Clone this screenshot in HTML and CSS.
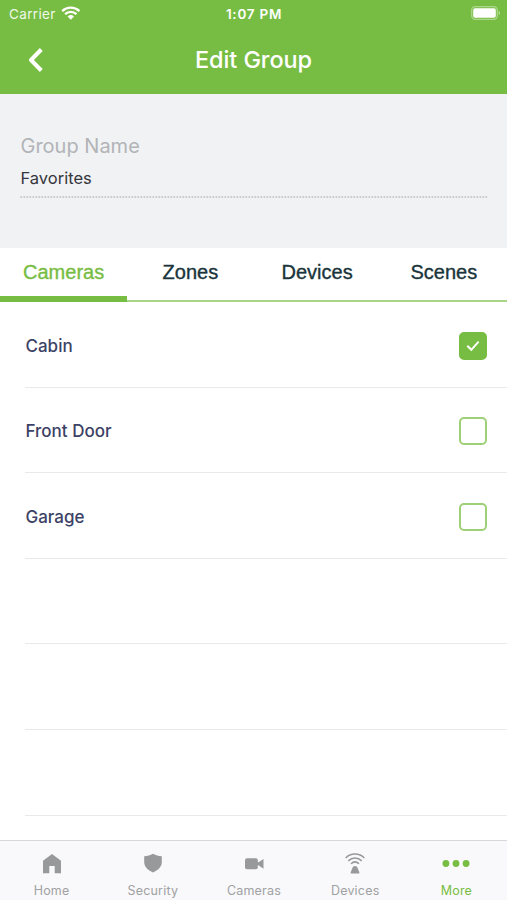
FILE: index.html
```html
<!DOCTYPE html>
<html lang="en">
<head>
<meta charset="utf-8">
<title>Edit Group</title>
<link rel="stylesheet" href="styles.css">
</head>
<body>
<div class="app">
  <header class="top">
    <div class="status">
      <div class="carrier"><span>Carrier</span>
        <svg width="20" height="14" viewBox="0 0 20 14" fill="none" stroke="#fff" stroke-width="2.3"><path d="M1.2 5.1a12.6 12.6 0 0 1 17.2 0M4.1 8.2a8.4 8.4 0 0 1 11.4 0"/><path d="M6.600 10.500a4.700 4.700 0 0 1 6.400 0L9.800 13.700z" fill="#fff" stroke="none"/></svg>
      </div>
      <span class="time">1:07 PM</span>
      <svg class="battery" width="30" height="14" viewBox="0 0 30 14"><rect x=".7" y=".7" width="25.600" height="12.600" rx="3.500" fill="none" stroke="#fff" stroke-opacity=".4" stroke-width="1.300"/><rect x="2.200" y="2.200" width="22.600" height="9.600" rx="1.800" fill="#fff"/><path d="M27.700 5v4a2.200 2.200 0 0 0 0-4z" fill="#fff" fill-opacity=".5"/></svg>
    </div>
    <div class="navbar">
      <svg class="back" width="16" height="26" viewBox="0 0 16 26" fill="none" stroke="#fff" stroke-width="4" stroke-linejoin="round"><path d="M14.300 2.500 4 13 14.300 23.500"/></svg>
      <h1>Edit Group</h1>
    </div>
  </header>
  <section class="group">
    <label for="name">Group Name</label>
    <div class="value" id="name">Favorites</div>
    <svg class="dots" width="468" height="2" viewBox="0 0 468 2"><path d="M.5 1h467.500" stroke="#bcbdc0" stroke-width="1.5" stroke-dasharray="1.7 1.3"/></svg>
  </section>
  <nav class="tabs">
    <div class="tab active"><span>Cameras</span></div>
    <div class="tab"><span>Zones</span></div>
    <div class="tab"><span>Devices</span></div>
    <div class="tab"><span>Scenes</span></div>
  </nav>
  <main class="list">
    <div class="row"><span>Cabin</span><i class="box checked"><svg width="14" height="12" viewBox="0 0 14 12" fill="none" stroke="#fff" stroke-width="2"><path d="M1.300 5.800 5.300 9.800 12.600 1.700"/></svg></i></div>
    <div class="row"><span>Front Door</span><i class="box"></i></div>
    <div class="row"><span>Garage</span><i class="box"></i></div>
    <div class="row"></div>
    <div class="row"></div>
    <div class="row"></div>
  </main>
  <footer class="bar">
    <div class="item"><svg width="30" height="24" viewBox="0 0 30 24"><path fill="currentColor" d="M6 21.200V8.800L15 2l9 6.800v12.400h-6.300V14h-5.400v7.200z"/></svg><span>Home</span></div>
    <div class="item"><svg width="30" height="24" viewBox="0 0 30 24"><path fill="currentColor" d="M15 1.800c2.800 1.500 5.500 2.200 8.800 2.400V10c0 4.900-3.700 8.200-8.800 10.500C9.900 18.200 6.200 14.900 6.200 10V4.200c3.300-.2 6-.9 8.800-2.400z"/></svg><span>Security</span></div>
    <div class="item"><svg width="30" height="24" viewBox="0 0 30 24"><rect x="6" y="6.300" width="12.800" height="11" rx="2" fill="currentColor"/><path fill="currentColor" d="M18 10.300h1.500l5-3.400v9.800l-5-3.400H18z"/></svg><span>Cameras</span></div>
    <div class="item"><svg width="30" height="24" viewBox="0 0 30 24" fill="none" stroke="currentColor" stroke-width="1.500"><path d="M5.700 6c5-5.300 13.600-5.300 18.600 0M8.300 8.900c3.900-3.900 9.500-3.900 13.400 0M11 11.700c2.400-2.200 5.600-2.200 8 0"/><path d="M15 14c1.500 0 2.100.8 2.700 2.200l1.700 4.200q.3 1.100-.8 1.100h-7.200q-1.100 0-.8-1.100l1.700-4.200C12.900 14.800 13.500 14 15 14z" fill="currentColor" stroke="none"/></svg><span>Devices</span></div>
    <div class="item on"><svg width="30" height="24" viewBox="0 0 30 24" fill="currentColor"><circle cx="4.900" cy="11.500" r="3.400"/><circle cx="15" cy="11.500" r="3.400"/><circle cx="25.100" cy="11.500" r="3.400"/></svg><span>More</span></div>
  </footer>
</div>
</body>
</html>
```
FILE: styles.css
```css
* { box-sizing: border-box; }
body { margin: 0; background: #fff; font-family: Inter, "Liberation Sans", sans-serif; }
svg { display: block; }
.app { width: 507px; height: 900px; display: flex; flex-direction: column; overflow: hidden; }

.top { height: 94px; background: #78bd43; color: #fff; }
.status { height: 28px; display: grid; grid-template-columns: 1fr auto 1fr; align-items: center; padding: 0 6px 0 9px; font-size: 13.5px; line-height: 28px; }
.carrier { display: flex; align-items: center; gap: 5px; letter-spacing: .35px; color: #f0f8e9; }
.carrier svg { margin-top: -2px; }
.time { font-weight: 600; font-size: 13.5px; letter-spacing: .75px; margin-right: 2px; }
.battery { justify-self: end; margin-top: -2px; }
.navbar { height: 63px; display: grid; grid-template-columns: 1fr auto 1fr; align-items: center; padding: 0 27px; }
h1 { margin: 0; font-size: 23.5px; line-height: 63px; font-weight: 500; letter-spacing: -.1px; }

.group { height: 154px; background: #f1f2f4; padding: 37px 19px 0 20px; }
label { display: block; font-size: 20px; line-height: 30px; color: #b2b4b7; padding-left: .5px; }
.value { font-size: 16.5px; line-height: 35px; height: 35px; color: #36363c; padding-left: .5px; }
.dots { width: 468px; }

.tabs { height: 54px; display: grid; grid-template-columns: repeat(4, 1fr); border-bottom: 2px solid #a9d587; background: #fff; }
.tab { font: 500 20px/49px "Liberation Sans", Arial, sans-serif; text-align: center; color: #19343a; -webkit-text-stroke: .35px currentColor; padding-left: .5px; }
.tab.active { color: #78bd43; border-bottom: 6px solid #78bd43; height: 54px; }

.list { height: 538px; overflow: hidden; }
.row { height: 85.6px; margin-left: 25px; padding: 3px 20px 0 .5px; border-bottom: 1px solid #e9e9eb; display: flex; align-items: center; justify-content: space-between; font-size: 17px; font-weight: 500; color: #3c4265; }
.box { width: 28px; height: 28px; border: 2px solid #9ed078; border-radius: 5px; display: flex; align-items: center; justify-content: center; }
.checked { background: #78bd43; border-color: #78bd43; }

.bar { height: 60px; border-top: 1px solid #d8d8da; background: #f9f9fb; display: grid; grid-template-columns: repeat(5, 1fr); padding-left: 1px; }
.item { display: flex; flex-direction: column; align-items: center; padding-top: 11px; color: #98999a; font-size: 12.5px; line-height: 16px; }
.item span { margin-top: 7px; letter-spacing: .2px; color: #a0a1a3; }
.on, .on span { color: #78bd43; }
```
